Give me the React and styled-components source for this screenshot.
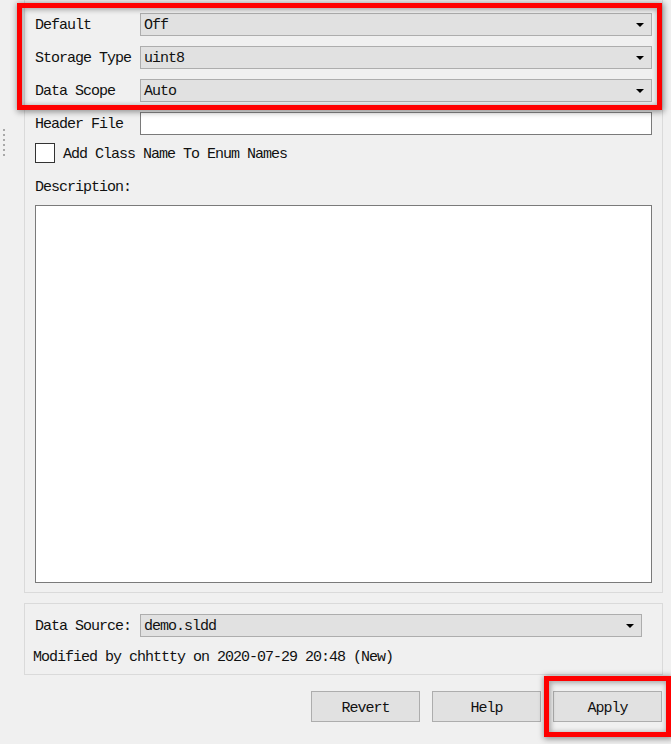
import React from "react";
import styled, { createGlobalStyle } from "styled-components";

const GlobalStyle = createGlobalStyle`
  html, body {
    margin: 0;
    padding: 0;
    background: #f0f0f0;
  }
  body {
    font-family: "Liberation Mono", "DejaVu Sans Mono", monospace;
    font-size: 15px;
    letter-spacing: -1px;
    color: #111;
  }
`;

const Page = styled.div`
  position: relative;
  width: 671px;
  height: 744px;
  display: flex;
  overflow: hidden;
`;

const Gutter = styled.div`
  width: 24px;
  padding: 129px 0 0 3px;
  box-sizing: border-box;
  display: flex;
  flex-direction: column;
  gap: 3px;
`;

const Dot = styled.span`
  width: 2px;
  height: 2px;
  background: #a8a8a8;
`;

const Column = styled.div`
  width: 639px;
  display: flex;
  flex-direction: column;
`;

const MainPanel = styled.div`
  height: 593px;
  box-sizing: border-box;
  border: 1px solid #dadada;
  border-top: none;
  padding: 13px 10px 9px 10px;
  display: flex;
  flex-direction: column;
`;

const FormGrid = styled.div`
  display: grid;
  grid-template-columns: 105px 1fr;
  grid-auto-rows: 23px;
  row-gap: 10px;
  align-items: center;
`;

const Label = styled.span`
  line-height: 20px;
  padding-top: 2px;
  white-space: nowrap;
`;

const Combo = styled.div`
  height: 23px;
  box-sizing: border-box;
  background: #e1e1e1;
  border: 1px solid #adadad;
  display: flex;
  align-items: center;
  justify-content: space-between;
  padding: 2px 7px 0 3px;
`;

const Arrow = styled.span`
  width: 0;
  height: 0;
  margin-bottom: 2px;
  border-left: 4px solid transparent;
  border-right: 4px solid transparent;
  border-top: 4px solid #000;
`;

const TextInput = styled.div`
  height: 23px;
  box-sizing: border-box;
  background: #fff;
  border: 1px solid #7a7a7a;
  border-top-color: #8a8a8a;
`;

const CheckRow = styled.label`
  display: flex;
  align-items: flex-start;
  gap: 8px;
  margin-top: 8px;
  height: 20px;
`;

const CheckBox = styled.span`
  width: 20px;
  height: 20px;
  box-sizing: border-box;
  background: #fff;
  border: 1px solid #333;
`;

const CheckText = styled.span`
  line-height: 18px;
  padding-top: 3px;
  white-space: nowrap;
`;

const DescLabel = styled(Label)`
  display: block;
  margin-top: 13px;
`;

const TextArea = styled.div`
  flex: 1;
  margin-top: 7px;
  background: #fff;
  border: 1px solid #7a7a7a;
`;

const SourcePanel = styled.div`
  margin-top: 10px;
  height: 72px;
  box-sizing: border-box;
  border: 1px solid #dadada;
  padding: 10px 20px 0 10px;
  display: flex;
  flex-direction: column;
`;

const SourceRow = styled.div`
  display: grid;
  grid-template-columns: 105px 1fr;
  align-items: center;
`;

const Modified = styled.div`
  margin: 10px 0 0 -2px;
  padding-top: 2px;
  line-height: 18px;
  white-space: nowrap;
`;

const ButtonBar = styled.div`
  display: flex;
  justify-content: flex-end;
  gap: 12px;
  margin: 16px 1px 0 0;
`;

const Button = styled.button`
  width: 109px;
  height: 31px;
  box-sizing: border-box;
  background: #e1e1e1;
  border: 1px solid #adadad;
  font: inherit;
  letter-spacing: inherit;
  color: #111;
  padding: 3px 0 0 0;
`;

const Highlight = styled.div`
  position: absolute;
  left: ${(p) => p.$x}px;
  top: ${(p) => p.$y}px;
  width: ${(p) => p.$w}px;
  height: ${(p) => p.$h}px;
  box-sizing: border-box;
  border: 5px solid #ff0000;
  box-shadow: 1px 1px 6px 1px rgba(0, 0, 0, 0.4), inset 1px 1px 5px 1px rgba(0, 0, 0, 0.3);
  pointer-events: none;
`;

const fields = [
  { label: "Default", value: "Off" },
  { label: "Storage Type", value: "uint8" },
  { label: "Data Scope", value: "Auto" },
];

export default function App() {
  return (
    <>
      <GlobalStyle />
      <Page>
        <Gutter>
          {Array.from({ length: 6 }).map((_, i) => (
            <Dot key={i} />
          ))}
        </Gutter>
        <Column>
          <MainPanel>
            <FormGrid>
              {fields.map((f) => (
                <React.Fragment key={f.label}>
                  <Label>{f.label}</Label>
                  <Combo>
                    <span>{f.value}</span>
                    <Arrow />
                  </Combo>
                </React.Fragment>
              ))}
              <Label>Header File</Label>
              <TextInput />
            </FormGrid>
            <CheckRow>
              <CheckBox />
              <CheckText>Add Class Name To Enum Names</CheckText>
            </CheckRow>
            <DescLabel>Description:</DescLabel>
            <TextArea />
          </MainPanel>
          <SourcePanel>
            <SourceRow>
              <Label>Data Source:</Label>
              <Combo>
                <span>demo.sldd</span>
                <Arrow />
              </Combo>
            </SourceRow>
            <Modified>Modified by chhttty on 2020-07-29 20:48 (New)</Modified>
          </SourcePanel>
          <ButtonBar>
            <Button>Revert</Button>
            <Button>Help</Button>
            <Button>Apply</Button>
          </ButtonBar>
        </Column>
        <Highlight $x={17} $y={3} $w={645} $h={107} />
        <Highlight $x={544} $y={676} $w={127} $h={61} />
      </Page>
    </>
  );
}
